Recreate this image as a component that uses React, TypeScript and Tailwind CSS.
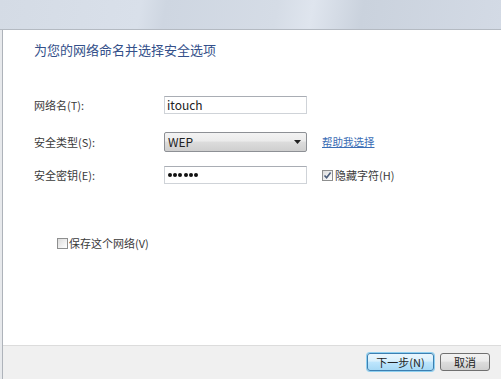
import React from "react";

const font = {
  fontFamily: '"Noto Sans CJK SC", "Liberation Sans", sans-serif',
};

function Check({ checked }: { checked?: boolean }) {
  return (
    <span className="flex h-[11px] w-[11px] items-center justify-center border border-[#8e8f8f] bg-[linear-gradient(135deg,#dcdcdc,#ffffff)]">
      {checked && (
        <svg width="9" height="9" viewBox="0 0 9 9">
          <path d="M1.5 4.5 L3.6 6.8 L7.6 1.6" fill="none" stroke="#4b5d7a" strokeWidth="1.6" />
        </svg>
      )}
    </span>
  );
}

const mask = [0, 1, 2, 3, 4, 5];

export default function App() {
  return (
    <div className="flex h-[379px] w-[501px] flex-col overflow-hidden bg-white text-[11px] text-[#3a3a3a]" style={font}>
      {/* glass title strip */}
      <div className="h-[30px] shrink-0 border-b border-[#b4bac2] bg-[linear-gradient(100deg,#d4dbe5_0%,#d9e0ea_28%,#ced6e1_33%,#d5dce6_55%,#dfe5ee_62%,#cad2dd_72%,#d3dae5_100%)]" />

      <div className="flex min-h-0 flex-1">
        <div className="w-[2px] shrink-0 bg-[#e7e9ec]" />
        <div className="w-[1px] shrink-0 bg-[#aeb3ba]" />

        <div className="flex flex-1 flex-col">
          <div className="flex-1 pl-[31px] pt-[12px]">
            <div className="text-[13px] leading-[16px] text-[#34508a]">为您的网络命名并选择安全选项</div>

            <div className="mt-[38px] flex items-center">
              <span className="w-[130px] leading-[14px]">网络名(T):</span>
              <div className="flex h-[18px] w-[143px] items-center border border-[#cfd3d8] border-t-[#a9adb4] px-[2px] text-[12px] leading-none text-[#222]">
                itouch
              </div>
            </div>

            <div className="mt-[18px] flex items-center">
              <span className="w-[130px] leading-[14px]">安全类型(S):</span>
              <div className="flex h-[20px] w-[143px] items-center justify-between rounded-[2px] border border-[#8d9095] bg-[linear-gradient(#f3f3f3,#ebebeb_45%,#dcdcdc_50%,#cfcfcf)] pl-[3px] pr-[5px] text-[12px] leading-none text-[#222]">
                <span>WEP</span>
                <svg width="7" height="4" viewBox="0 0 7 4">
                  <path d="M0 0 H7 L3.5 4 Z" fill="#222" />
                </svg>
              </div>
              <span className="ml-[15px] text-[10.5px] text-[#3a6db5] underline">帮助我选择</span>
            </div>

            <div className="mt-[14px] flex items-center">
              <span className="w-[130px] leading-[14px]">安全密钥(E):</span>
              <div className="flex h-[18px] w-[143px] items-center gap-[1.2px] border border-[#cfd3d8] border-t-[#a9adb4] pl-[3px]">
                {mask.map((i) => (
                  <span key={i} className="h-[4px] w-[4px] rounded-full bg-[#111]" />
                ))}
              </div>
              <span className="ml-[15px] flex items-center gap-[2px]">
                <Check checked />
                <span>隐藏字符(H)</span>
              </span>
            </div>

            <div className="ml-[23px] mt-[52px] flex items-center gap-[1px] leading-[14px]">
              <Check />
              <span>保存这个网络(V)</span>
            </div>
          </div>

          <div className="flex h-[34px] shrink-0 justify-end gap-[6px] border-t border-[#dcdcdc] bg-[#f0f0f0] pr-[11px] pt-[7px]">
            <button className="h-[18px] w-[67px] rounded-[3px] border border-[#3c7fb1] bg-[linear-gradient(#eaf6fd,#d9f0fc_45%,#bee6fd_50%,#a7d9f5)] text-[11px] leading-none text-[#222] shadow-[0_0_0_1px_#8fd0f0]">
              下一步(N)
            </button>
            <button className="h-[18px] w-[50px] rounded-[3px] border border-[#707070] bg-[linear-gradient(#f2f2f2,#ebebeb_45%,#dddddd_50%,#cfcfcf)] text-[11px] leading-none text-[#222]">
              取消
            </button>
          </div>
        </div>
      </div>
    </div>
  );
}
